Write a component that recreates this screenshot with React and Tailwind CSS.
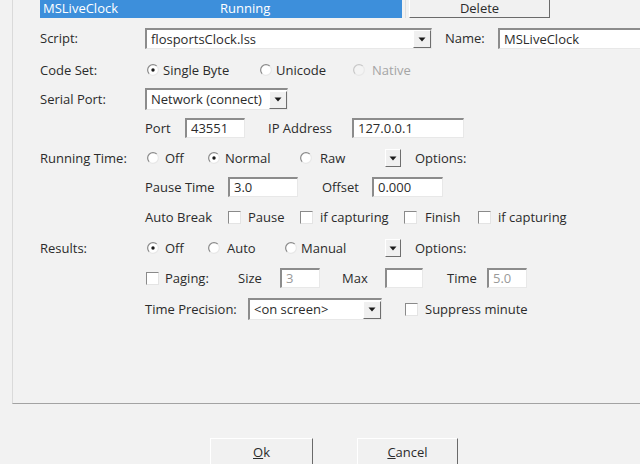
import React from 'react'

const TXT = 'text-[#2b2b2b]'

function Radio({ checked, disabled }) {
  const dark = disabled ? '#c8c8c8' : '#8a8a8a'
  return (
    <svg width="12" height="12" viewBox="0 0 12 12" className="shrink-0">
      <circle cx="6" cy="6" r="5.3" fill={disabled ? '#f4f4f4' : '#ffffff'} />
      <path d="M2.2 9.8 A5.3 5.3 0 0 1 9.8 2.2" fill="none" stroke={dark} strokeWidth="1.2" />
      <path d="M9.8 2.2 A5.3 5.3 0 0 1 2.2 9.8" fill="none" stroke="#e8e8e8" strokeWidth="1.2" />
      {checked && <circle cx="6" cy="6" r="1.7" fill="#1a1a1a" />}
    </svg>
  )
}

function Check() {
  return (
    <span className="w-[13px] h-[13px] shrink-0 bg-white border-t border-l border-[#8a8a8a] border-r-[#e4e4e4] border-b-[#e4e4e4] border-r border-b" />
  )
}

function Arrow() {
  return (
    <svg width="8" height="5" viewBox="0 0 8 5">
      <path d="M0.5 0.5 H7.5 L4 4.5 Z" fill="#1a1a1a" />
    </svg>
  )
}

function ArrowBtn({ className = '' }) {
  return (
    <span className={`flex items-center justify-center shrink-0 bg-[#f0f0f0] border-t border-l border-white border-r border-b border-r-[#6e6e6e] border-b-[#6e6e6e] ${className}`}>
      <Arrow />
    </span>
  )
}

function Box({ className = '', children, dim }) {
  return (
    <div className={`shrink-0 h-full flex items-center pl-[4px] bg-white border-t-2 border-l-2 border-t-[#8c8c8c] border-l-[#8c8c8c] border-r border-b border-r-[#e8e8e8] border-b-[#e8e8e8] whitespace-nowrap ${dim ? 'text-[#9a9a9a]' : TXT} ${className}`}>
      {children}
    </div>
  )
}

function Combo({ className = '', children }) {
  return (
    <div className={`shrink-0 h-full flex items-center bg-white border-t-2 border-l-2 border-t-[#8c8c8c] border-l-[#8c8c8c] border-r border-b border-r-[#e8e8e8] border-b-[#e8e8e8] ${className}`}>
      <span className="flex-1 pl-[4px] whitespace-nowrap">{children}</span>
      <ArrowBtn className="w-[18px] h-[18px]" />
    </div>
  )
}

function Btn({ className = '', children }) {
  return (
    <div className={`shrink-0 flex items-center justify-center bg-[#f1f1f1] border border-t-white border-l-white border-r-[#6a6a6a] border-b-[#6a6a6a] ${TXT} ${className}`}>
      {children}
    </div>
  )
}

export default function App() {
  return (
    <div className={`w-[640px] h-[464px] overflow-hidden bg-[#f2f2f2] flex flex-col font-['Open_Sans',sans-serif] text-[13px] leading-none ${TXT}`}>
      {/* Panel */}
      <div className="ml-[12px] h-[404px] shrink-0 border-l border-b border-l-[#dadada] border-b-[#a3a3a3] pl-[27px] flex flex-col">
        {/* List row + Delete */}
        <div className="flex h-[22px] -mt-[4px] shrink-0">
          <div className="w-[366px] h-full border-r border-[#dedede] shrink-0">
            <div className="w-[362px] h-full bg-[#3d8fdb] text-white flex items-center pt-[2px]">
              <span className="w-[180px] pl-[3px] shrink-0">MSLiveClock</span>
              <span>Running</span>
            </div>
          </div>
          <Btn className="ml-[3px] w-[141px] h-full pt-[2px]">Delete</Btn>
        </div>

        {/* Script */}
        <div className="flex items-center h-[21px] mt-[10px] shrink-0">
          <span className="w-[105px] shrink-0">Script:</span>
          <Combo className="w-[287px]">flosportsClock.lss</Combo>
          <span className="ml-[13px] w-[53px] shrink-0">Name:</span>
          <Box className="w-[150px]">MSLiveClock</Box>
        </div>

        {/* Code Set */}
        <div className="flex items-center h-[20px] mt-[11px] shrink-0">
          <span className="w-[107px] shrink-0">Code Set:</span>
          <div className="w-[113px] shrink-0 flex items-center gap-[4px]"><Radio checked /><span>Single Byte</span></div>
          <div className="w-[93px] shrink-0 flex items-center gap-[4px]"><Radio /><span>Unicode</span></div>
          <div className="flex items-center gap-[7px] text-[#a5a5a5]"><Radio disabled /><span>Native</span></div>
        </div>

        {/* Serial Port */}
        <div className="flex items-center h-[22px] mt-[8px] shrink-0">
          <span className="w-[105px] shrink-0">Serial Port:</span>
          <Combo className="w-[143px]">Network (connect)</Combo>
        </div>

        {/* Port / IP */}
        <div className="flex items-center h-[20px] mt-[8px] shrink-0">
          <span className="w-[105px] shrink-0" />
          <span className="w-[40px] shrink-0">Port</span>
          <Box className="w-[60px]">43551</Box>
          <span className="ml-[23px] w-[84px] shrink-0">IP Address</span>
          <Box className="w-[112px]">127.0.0.1</Box>
        </div>

        {/* Running Time */}
        <div className="flex items-center h-[20px] mt-[10px] shrink-0">
          <span className="w-[107px] shrink-0">Running Time:</span>
          <div className="w-[61px] shrink-0 flex items-center gap-[6px]"><Radio /><span>Off</span></div>
          <div className="w-[92px] shrink-0 flex items-center gap-[5px]"><Radio checked /><span>Normal</span></div>
          <div className="w-[85px] shrink-0 flex items-center gap-[8px]"><Radio /><span>Raw</span></div>
          <ArrowBtn className="w-[16px] h-[18px]" />
          <span className="ml-[14px]">Options:</span>
        </div>

        {/* Pause Time / Offset */}
        <div className="flex items-center h-[20px] mt-[9px] shrink-0">
          <span className="w-[105px] shrink-0" />
          <span className="w-[83px] shrink-0">Pause Time</span>
          <Box className="w-[70px]">3.0</Box>
          <span className="ml-[24px] w-[50px] shrink-0">Offset</span>
          <Box className="w-[71px]">0.000</Box>
        </div>

        {/* Auto Break */}
        <div className="flex items-center h-[20px] mt-[10px] shrink-0">
          <span className="w-[105px] shrink-0" />
          <span className="w-[83px] shrink-0">Auto Break</span>
          <div className="w-[72px] shrink-0 flex items-center gap-[7px]"><Check /><span>Pause</span></div>
          <div className="w-[104px] shrink-0 flex items-center gap-[7px]"><Check /><span>if capturing</span></div>
          <div className="w-[74px] shrink-0 flex items-center gap-[8px]"><Check /><span>Finish</span></div>
          <div className="flex items-center gap-[7px]"><Check /><span>if capturing</span></div>
        </div>

        {/* Results */}
        <div className="flex items-center h-[20px] mt-[11px] shrink-0">
          <span className="w-[107px] shrink-0">Results:</span>
          <div className="w-[61px] shrink-0 flex items-center gap-[6px]"><Radio checked /><span>Off</span></div>
          <div className="w-[77px] shrink-0 flex items-center gap-[7px]"><Radio /><span>Auto</span></div>
          <div className="w-[100px] shrink-0 flex items-center gap-[4px]"><Radio /><span>Manual</span></div>
          <ArrowBtn className="w-[16px] h-[18px]" />
          <span className="ml-[14px]">Options:</span>
        </div>

        {/* Paging */}
        <div className="flex items-center h-[20px] mt-[10px] shrink-0">
          <span className="w-[106px] shrink-0" />
          <div className="w-[92px] shrink-0 flex items-center gap-[6px]"><Check /><span>Paging:</span></div>
          <span className="w-[42px] shrink-0">Size</span>
          <Box className="w-[40px] bg-[#fafafa]" dim>3</Box>
          <span className="ml-[22px] w-[43px] shrink-0">Max</span>
          <Box className="w-[38px]" />
          <span className="ml-[24px] w-[40px] shrink-0">Time</span>
          <Box className="w-[40px] bg-[#fafafa]" dim>5.0</Box>
        </div>

        {/* Time Precision */}
        <div className="flex items-center h-[22px] mt-[10px] shrink-0">
          <span className="w-[105px] shrink-0" />
          <span className="w-[103px] shrink-0">Time Precision:</span>
          <Combo className="w-[134px]">&lt;on screen&gt;</Combo>
          <div className="ml-[23px] flex items-center gap-[7px]"><Check /><span>Suppress minute</span></div>
        </div>
      </div>

      {/* Buttons */}
      <div className="flex mt-[34px] shrink-0">
        <Btn className="ml-[210px] w-[103px] h-[28px] border-t-[#9a9a9a] border-l-[#9a9a9a]">
          <span><span className="underline">O</span>k</span>
        </Btn>
        <Btn className="ml-[44px] w-[101px] h-[28px]">
          <span><span className="underline">C</span>ancel</span>
        </Btn>
      </div>
    </div>
  )
}
